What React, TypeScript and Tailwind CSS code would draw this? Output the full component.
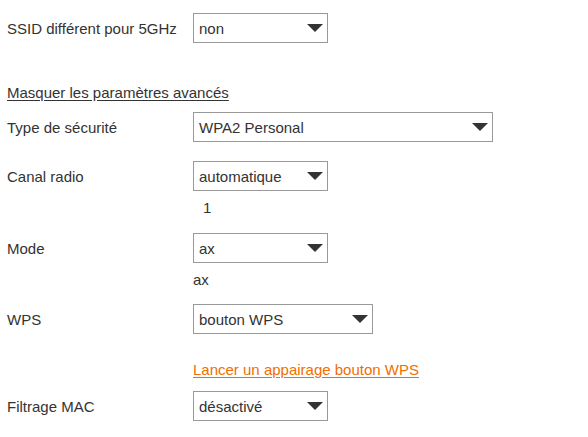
import React from 'react'

function Arrow() {
  return (
    <svg width="16" height="8" viewBox="0 0 16 8" className="shrink-0">
      <path d="M0 0 H16 L8 8 Z" fill="#333333" />
    </svg>
  )
}

function FakeSelect({ value, width }: { value: string; width: string }) {
  return (
    <div className={`${width} h-[30px] border border-[#999999] bg-white flex items-center justify-between pl-[5px] pr-[4px]`}>
      <span>{value}</span>
      <Arrow />
    </div>
  )
}

function Row({ label, children, className = '' }: { label: string; children: React.ReactNode; className?: string }) {
  return (
    <div className={`flex ${className}`}>
      <div className="w-[186px] h-[30px] flex items-center shrink-0">{label}</div>
      <div>{children}</div>
    </div>
  )
}

export default function App() {
  return (
    <main
      className="w-[588px] h-[437px] bg-white text-[#333333] text-[15px] leading-[17px] pl-[7px] overflow-hidden"
      style={{ fontFamily: '"Liberation Sans", Arial, sans-serif' }}
    >
      <Row label="SSID différent pour 5GHz" className="mt-[13px]">
        <FakeSelect value="non" width="w-[135px]" />
      </Row>

      <div className="mt-[41px]">
        <span className="underline underline-offset-2">Masquer les paramètres avancés</span>
      </div>

      <Row label="Type de sécurité" className="mt-[11px]">
        <FakeSelect value="WPA2 Personal" width="w-[300px]" />
      </Row>

      <Row label="Canal radio" className="mt-[19px]">
        <FakeSelect value="automatique" width="w-[135px]" />
      </Row>
      <div className="pl-[196px] mt-[8px]">1</div>

      <Row label="Mode" className="mt-[17px]">
        <FakeSelect value="ax" width="w-[135px]" />
      </Row>
      <div className="pl-[186px] mt-[8px]">ax</div>

      <Row label="WPS" className="mt-[16px]">
        <FakeSelect value="bouton WPS" width="w-[180px]" />
      </Row>

      <div className="pl-[186px] mt-[27px]">
        <a className="text-[#f16e00] underline underline-offset-2 cursor-pointer">Lancer un appairage bouton WPS</a>
      </div>

      <Row label="Filtrage MAC" className="mt-[13px]">
        <FakeSelect value="désactivé" width="w-[135px]" />
      </Row>
    </main>
  )
}
